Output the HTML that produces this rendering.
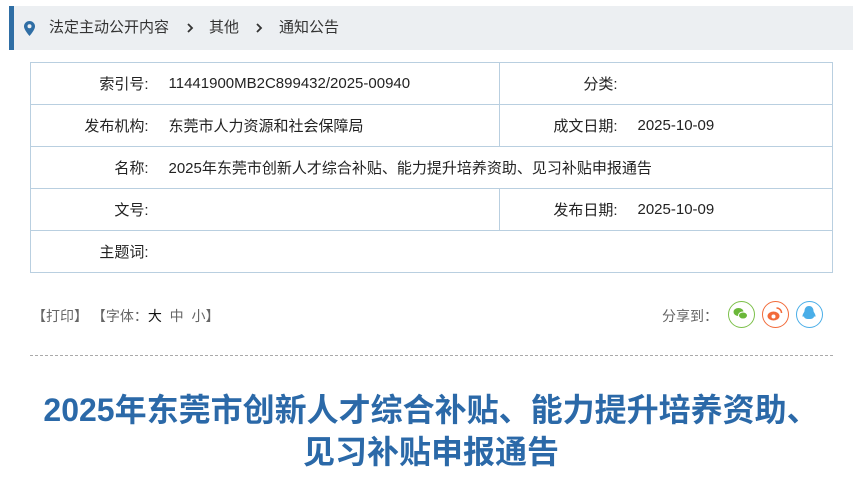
<!DOCTYPE html>
<html><head><meta charset="utf-8"><style>
*{margin:0;padding:0;box-sizing:border-box}
body{width:862px;height:478px;background:#fff;font-family:"Liberation Sans","Noto Sans CJK SC",sans-serif;position:relative;overflow:hidden;color:#333}
.bc{position:absolute;left:9px;top:6px;width:844px;height:44px;background:#eceff2;border-left:5px solid #2f6ea5;font-size:15px;color:#333;line-height:44px}
.bc span{position:absolute;top:0}
table{position:absolute;left:30px;top:62px;width:803px;border-collapse:collapse;font-size:15px;color:#222}
tr{border:1px solid #b9cfe0}
td{height:42px;padding:0}
.l{width:118px;text-align:right}
.v{padding-left:20px}
.sep{border-right:1px solid #b9cfe0}
.tool{position:absolute;top:306px;font-size:14px;color:#666}
.ic{position:absolute;top:301px;width:27px;height:27px;border-radius:50%;border:1.5px solid}
.dash{position:absolute;left:30px;top:355px;width:803px;border-top:1px dashed #aaa}
h1{position:absolute;left:0;width:862px;top:389px;text-align:center;font-size:32px;line-height:42px;color:#2b69a8;font-weight:bold}
</style></head><body>
<div class="bc">
<svg style="position:absolute;left:10px;top:15px" width="11" height="15" viewBox="0 0 11 15"><path d="M5.5 0C2.5 0 0 2.4 0 5.4 0 9 5.5 15 5.5 15S11 9 11 5.4C11 2.4 8.5 0 5.5 0z" fill="#2f6ea5"/><circle cx="5.5" cy="5.3" r="2" fill="#eceff2"/></svg>
<span style="left:35px">法定主动公开内容</span>
<svg style="position:absolute;left:172px;top:17px" width="8" height="10" viewBox="0 0 8 10"><path d="M2 1l4 4-4 4" stroke="#333" stroke-width="1.8" fill="none"/></svg>
<span style="left:195px">其他</span>
<svg style="position:absolute;left:241px;top:17px" width="8" height="10" viewBox="0 0 8 10"><path d="M2 1l4 4-4 4" stroke="#333" stroke-width="1.8" fill="none"/></svg>
<span style="left:265px">通知公告</span>
</div>
<table>
<tr><td class="l">索引号:</td><td class="v sep" style="width:351px">11441900MB2C899432/2025-00940</td><td class="l">分类:</td><td class="v"></td></tr>
<tr><td class="l">发布机构:</td><td class="v sep">东莞市人力资源和社会保障局</td><td class="l">成文日期:</td><td class="v">2025-10-09</td></tr>
<tr><td class="l">名称:</td><td class="v" colspan="3">2025年东莞市创新人才综合补贴、能力提升培养资助、见习补贴申报通告</td></tr>
<tr><td class="l">文号:</td><td class="v sep"></td><td class="l">发布日期:</td><td class="v">2025-10-09</td></tr>
<tr><td class="l">主题词:</td><td class="v" colspan="3"></td></tr>
</table>
<div class="tool" style="left:32px">【打印】 【字体：<span style="color:#111">大</span>&nbsp; 中&nbsp; 小】</div>
<div class="tool" style="left:662px">分享到：</div>
<div class="ic" style="left:728px;border-color:#7cc04a"><svg width="24" height="24" viewBox="0 0 24 24"><ellipse cx="9.5" cy="10" rx="5" ry="4" fill="#6bb83a"/><ellipse cx="14" cy="13.5" rx="4.5" ry="3.5" fill="#6bb83a" stroke="#fff" stroke-width="1"/></svg></div>
<div class="ic" style="left:762px;border-color:#f26b3a"><svg width="24" height="24" viewBox="0 0 24 24"><ellipse cx="10.5" cy="14" rx="6" ry="4.5" fill="#f26b3a"/><circle cx="10.5" cy="14.5" r="2" fill="#fff"/><path d="M13.5 6a5 5 0 0 1 5 5" stroke="#f26b3a" stroke-width="1.5" fill="none"/></svg></div>
<div class="ic" style="left:796px;border-color:#4aaee8"><svg width="24" height="24" viewBox="0 0 24 24"><path d="M12 4c-3 0-4.5 2.5-4.5 5 0 1-2 3-2 5 0 1 1 1 1.5 0 0 2 1.5 3 5 3s5-1 5-3c.5 1 1.5 1 1.5 0 0-2-2-4-2-5 0-2.5-1.5-5-4.5-5z" fill="#4aaee8"/></svg></div>
<div class="dash"></div>
<h1>2025年东莞市创新人才综合补贴、能力提升培养资助、<br>见习补贴申报通告</h1>
</body></html>
